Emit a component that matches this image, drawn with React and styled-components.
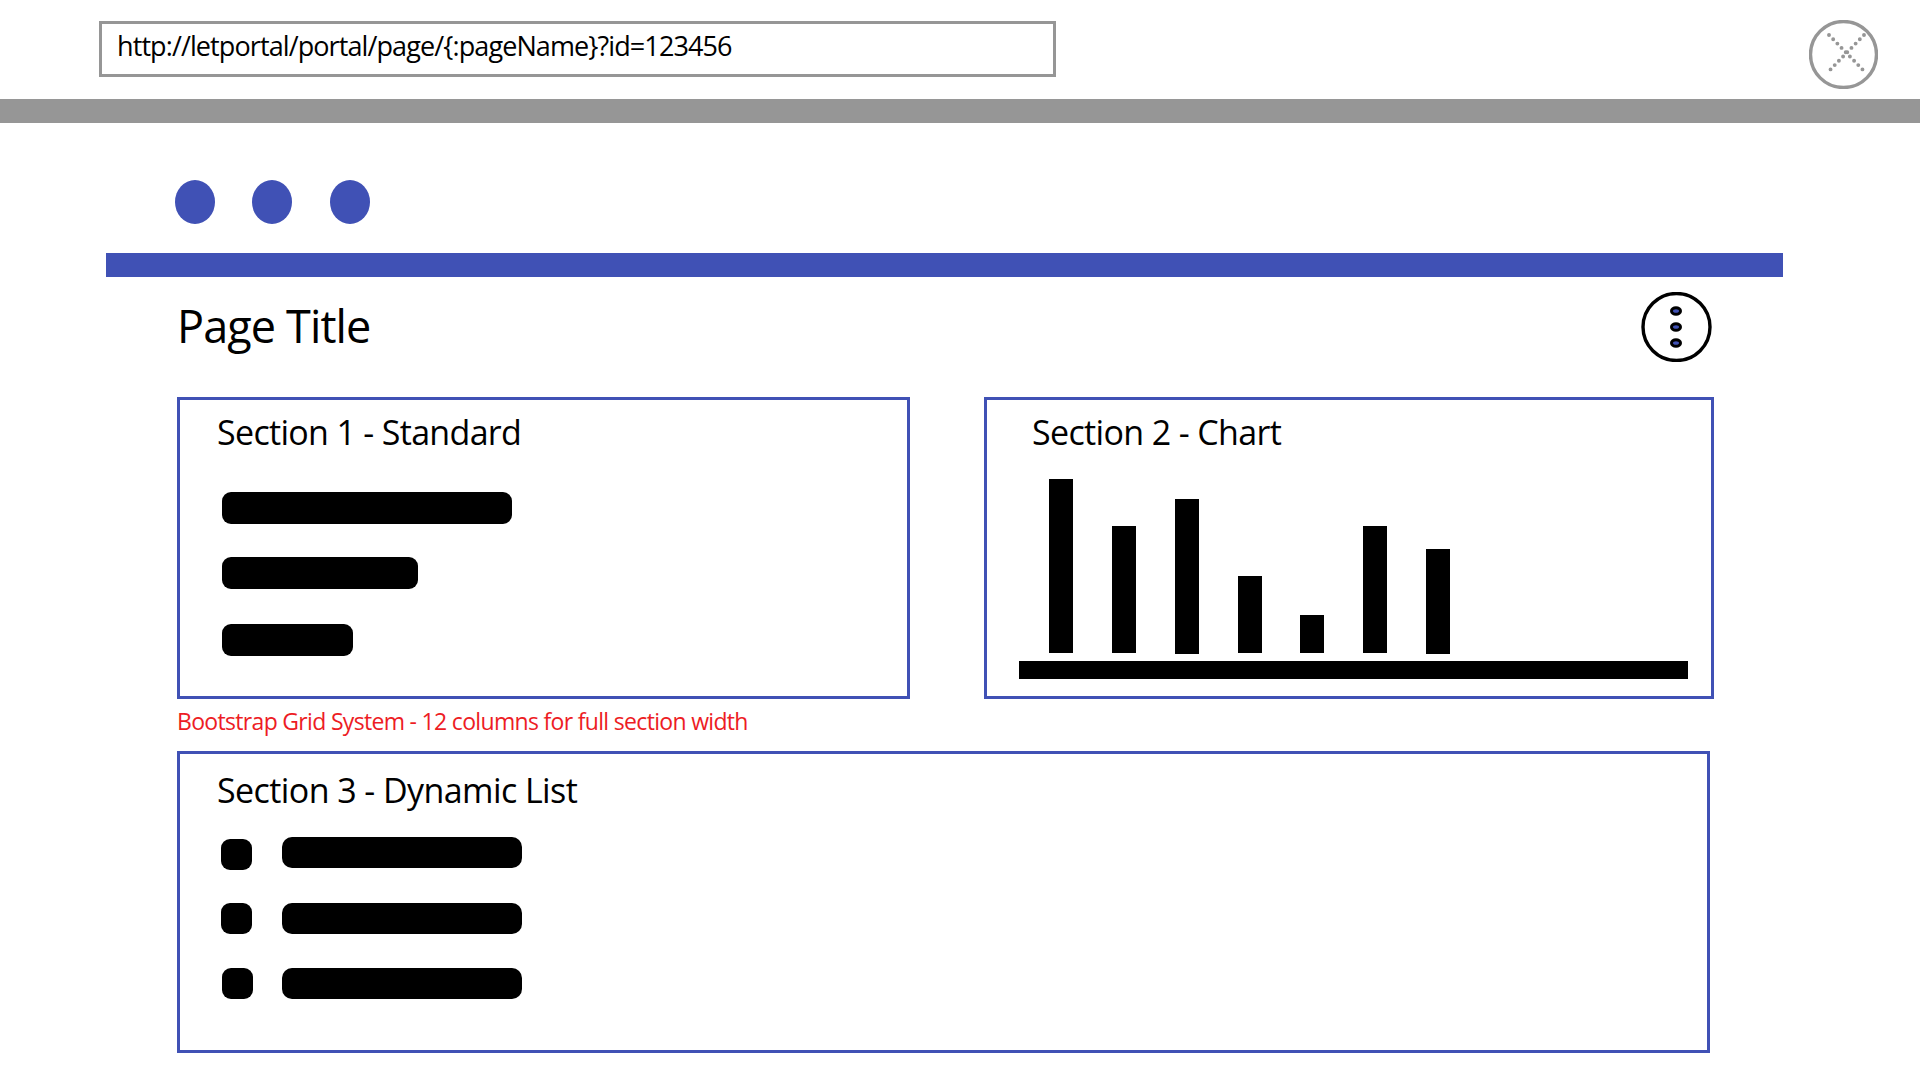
import React from "react";
import styled, { createGlobalStyle } from "styled-components";

const chartBars = [
  { height: 174, lift: 1 },
  { height: 127, lift: 1 },
  { height: 155, lift: 0 },
  { height: 77, lift: 1 },
  { height: 38, lift: 1 },
  { height: 127, lift: 1 },
  { height: 105, lift: 0 },
];

const standardBars = [
  { width: 290, top: 0 },
  { width: 196, top: 33 },
  { width: 131, top: 35 },
];

const listRows = [
  { top: 0, iconTop: 2, iconLeft: 0 },
  { top: 33, iconTop: 0, iconLeft: 0 },
  { top: 34, iconTop: 0, iconLeft: 1 },
];

export default function App() {
  return (
    <>
      <GlobalStyle />
      <Page>
        <TopRow>
          <UrlBox>{"http://letportal/portal/page/{:pageName}?id=123456"}</UrlBox>
          <CloseIcon viewBox="0 0 69 69">
            <circle cx="34.5" cy="34.5" r="33" fill="none" stroke="#969696" strokeWidth="3.4" />
            <path
              d="M20 15 L55 51 M55 15 L20 51"
              fill="none"
              stroke="#969696"
              strokeWidth="3.9"
              strokeLinecap="round"
              strokeDasharray="0 6"
            />
          </CloseIcon>
        </TopRow>
        <GrayBar />
        <Dots>
          <Dot />
          <Dot />
          <Dot />
        </Dots>
        <BlueBar />
        <TitleRow>
          <PageTitle>Page Title</PageTitle>
          <MenuIcon viewBox="0 0 71 70">
            <circle cx="35.5" cy="35" r="33.5" fill="#fff" stroke="#000" strokeWidth="3.4" />
            <ellipse cx="35" cy="19" rx="4.5" ry="3.3" fill="#4051b5" stroke="#000" strokeWidth="3" />
            <ellipse cx="35" cy="35" rx="4.5" ry="3.3" fill="#4051b5" stroke="#000" strokeWidth="3" />
            <ellipse cx="35" cy="51" rx="4.5" ry="3.3" fill="#4051b5" stroke="#000" strokeWidth="3" />
          </MenuIcon>
        </TitleRow>
        <TwoColumns>
          <Section>
            <SectionTitle $inset={37} $lineHeight={64} $tracking={-0.68}>Section 1 - Standard</SectionTitle>
            <StandardList>
              {standardBars.map((bar) => (
                <StandardBar key={bar.width} $width={bar.width} $top={bar.top} />
              ))}
            </StandardList>
          </Section>
          <Section>
            <SectionTitle $inset={45} $lineHeight={64} $tracking={-0.64}>Section 2 - Chart</SectionTitle>
            <Chart>
              {chartBars.map((bar, index) => (
                <ChartBar key={index} $height={bar.height} $lift={bar.lift} />
              ))}
            </Chart>
            <Axis />
          </Section>
        </TwoColumns>
        <GridNote>Bootstrap Grid System - 12 columns for full section width</GridNote>
        <WideSection>
          <SectionTitle $inset={37} $lineHeight={72} $tracking={-0.58}>Section 3 - Dynamic List</SectionTitle>
          <DynamicList>
            {listRows.map((row, index) => (
              <ListRow key={index} $top={row.top}>
                <ListIcon $top={row.iconTop} $left={row.iconLeft} />
                <ListBar />
              </ListRow>
            ))}
          </DynamicList>
        </WideSection>
      </Page>
    </>
  );
}

const GlobalStyle = createGlobalStyle`
  html, body {
    margin: 0;
    padding: 0;
    background: #fff;
    overflow: hidden;
  }
`;

const Page = styled.div`
  width: 1920px;
  height: 1080px;
  font-family: "Open Sans", "Noto Sans", sans-serif;
  color: #000;
`;

const TopRow = styled.div`
  height: 99px;
  box-sizing: border-box;
  padding: 20px 42px 0 99px;
  display: flex;
  justify-content: space-between;
  align-items: flex-start;
`;

const UrlBox = styled.div`
  width: 957px;
  height: 56px;
  margin-top: 1px;
  box-sizing: border-box;
  border: 3px solid #969696;
  padding-left: 15px;
  font-size: 27px;
  line-height: 44px;
  letter-spacing: -0.9px;
`;

const CloseIcon = styled.svg`
  width: 69px;
  height: 69px;
  display: block;
`;

const GrayBar = styled.div`
  height: 24px;
  background: #969696;
`;

const Dots = styled.div`
  display: flex;
  gap: 37.4px;
  padding: 57px 0 0 175px;
`;

const Dot = styled.div`
  width: 40px;
  height: 44px;
  border-radius: 50%;
  background: #4051b5;
`;

const BlueBar = styled.div`
  width: 1677px;
  height: 24px;
  margin: 29px 0 0 106px;
  background: #4051b5;
`;

const TitleRow = styled.div`
  width: 1535px;
  height: 85px;
  margin-left: 177px;
  box-sizing: border-box;
  padding-top: 15px;
  display: flex;
  justify-content: space-between;
  align-items: flex-start;
`;

const PageTitle = styled.h1`
  margin: 0;
  font-size: 45px;
  font-weight: 400;
  line-height: 68px;
  letter-spacing: -0.88px;
`;

const MenuIcon = styled.svg`
  width: 71px;
  height: 70px;
  display: block;
`;

const TwoColumns = styled.div`
  display: grid;
  grid-template-columns: 733px 730px;
  column-gap: 74px;
  margin: 35px 0 0 177px;
`;

const Section = styled.section`
  height: 302px;
  box-sizing: border-box;
  border: 3px solid #4051b5;
  display: flex;
  flex-direction: column;
`;

const WideSection = styled(Section)`
  width: 1533px;
  margin-left: 177px;
`;

const SectionTitle = styled.h2`
  margin: 0 0 0 ${(props) => props.$inset}px;
  font-size: 34px;
  font-weight: 400;
  line-height: ${(props) => props.$lineHeight}px;
  height: 66px;
  letter-spacing: ${(props) => props.$tracking}px;
`;

const StandardList = styled.div`
  display: flex;
  flex-direction: column;
  padding: 26px 0 0 42px;
`;

const StandardBar = styled.div`
  width: ${(props) => props.$width}px;
  height: 32px;
  margin-top: ${(props) => props.$top}px;
  border-radius: 9px;
  background: #000;
`;

const Chart = styled.div`
  height: 185px;
  margin-top: 3px;
  padding-left: 62px;
  display: flex;
  align-items: flex-end;
  gap: 38.85px;
`;

const ChartBar = styled.div`
  width: 24px;
  height: ${(props) => props.$height}px;
  margin-bottom: ${(props) => props.$lift}px;
  background: #000;
`;

const Axis = styled.div`
  width: 669px;
  height: 18px;
  margin: 7px 0 0 32px;
  background: #000;
`;

const GridNote = styled.p`
  margin: 0 0 0 177px;
  height: 52px;
  font-size: 23px;
  line-height: 45px;
  letter-spacing: -0.68px;
  color: #ed1c24;
`;

const DynamicList = styled.div`
  display: flex;
  flex-direction: column;
  padding: 17px 0 0 41px;
`;

const ListRow = styled.div`
  display: flex;
  align-items: flex-start;
  margin-top: ${(props) => props.$top}px;
`;

const ListIcon = styled.div`
  width: 31px;
  height: 31px;
  margin: ${(props) => props.$top}px ${(props) => 30 - props.$left}px 0 ${(props) => props.$left}px;
  border-radius: 9px;
  background: #000;
`;

const ListBar = styled.div`
  width: 240px;
  height: 31px;
  border-radius: 10px;
  background: #000;
`;
